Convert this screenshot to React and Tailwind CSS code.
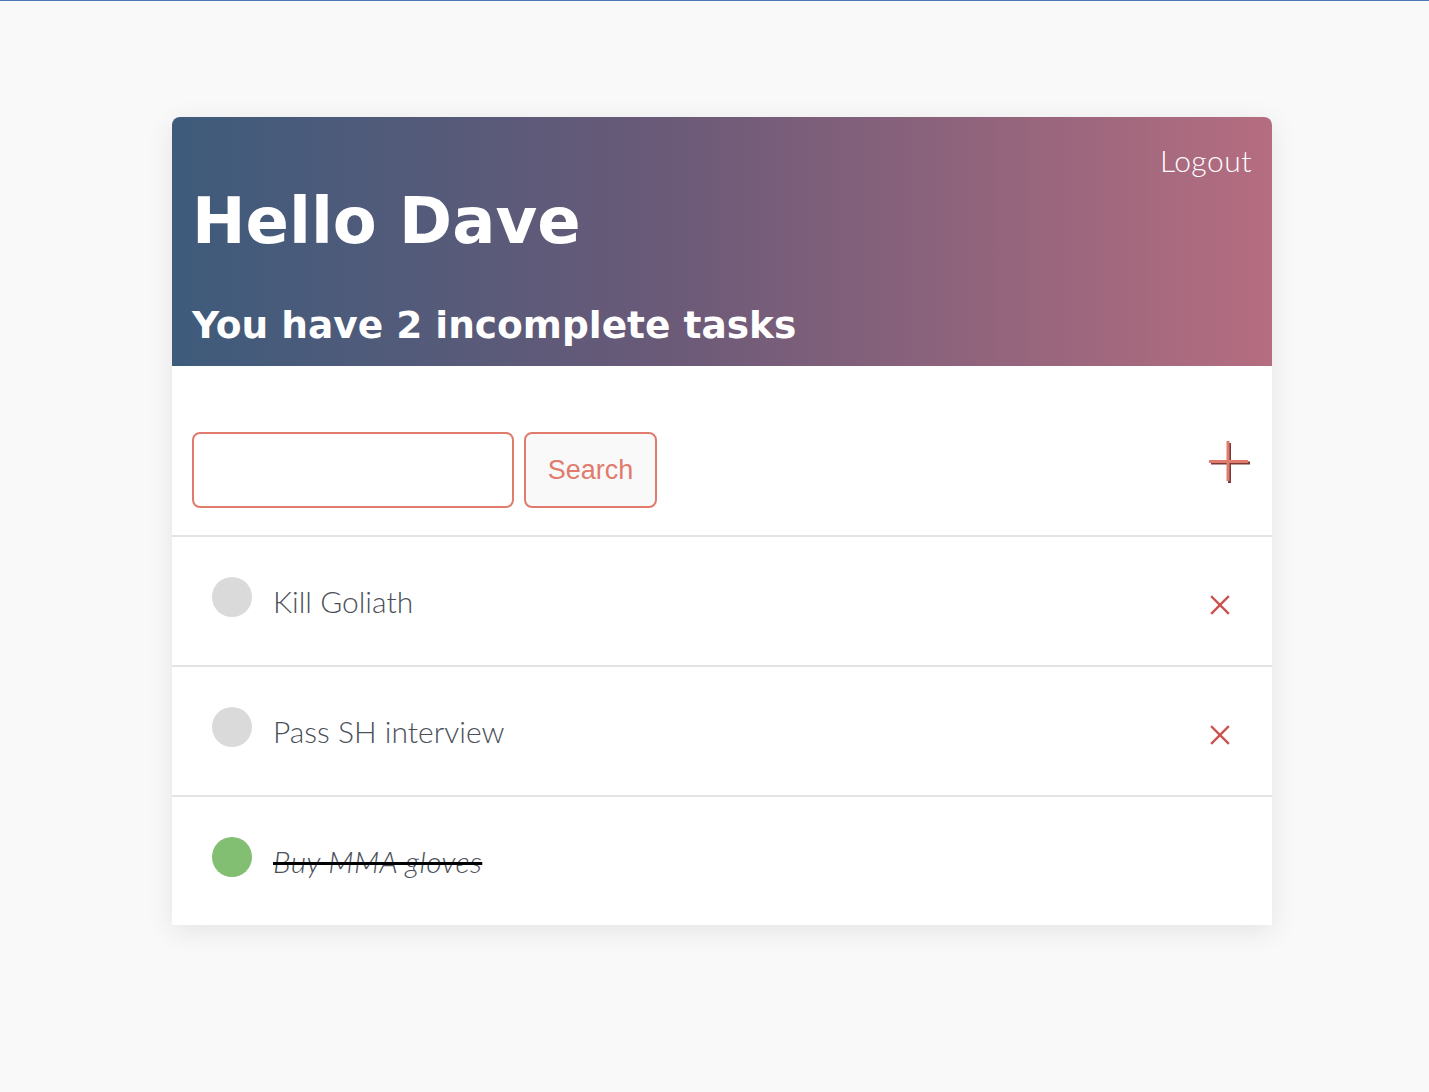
import React from "react";

function PlusIcon() {
  return (
    <svg width="44" height="44" viewBox="0 0 44 44" className="block">
      <g stroke="#7a3b37" strokeWidth="3">
        <line x1="20.5" y1="3" x2="20.5" y2="43" />
        <line x1="2" y1="23" x2="41" y2="23" />
      </g>
      <g stroke="#e07b6e" strokeWidth="3">
        <line x1="19" y1="1" x2="19" y2="41" />
        <line x1="0" y1="21.5" x2="39" y2="21.5" />
      </g>
    </svg>
  );
}

function XIcon() {
  return (
    <svg width="20" height="20" viewBox="0 0 20 20" className="block">
      <g stroke="#c9534f" strokeWidth="2.4" strokeLinecap="square">
        <line x1="2" y1="2" x2="18" y2="18" />
        <line x1="18" y1="2" x2="2" y2="18" />
      </g>
    </svg>
  );
}

function Row({ text, done }) {
  return (
    <div className="flex h-[130px] items-center border-t-2 border-[#e3e3e3] pl-10 pr-[42px]">
      <div
        className={
          done
            ? "h-10 w-10 shrink-0 rounded-full bg-[#82bf73] -mt-2"
            : "h-10 w-10 shrink-0 rounded-full bg-[#dadada] -mt-2"
        }
      />
      <div
        className={
          done
            ? "ml-[21px] text-[30px] font-light italic tracking-[0.4px] text-[#4b5058] line-through decoration-black decoration-[3px]"
            : "ml-[21px] text-[30px] font-light text-[#4b5058]"
        }
        style={{ fontFamily: "Lato, 'Open Sans', sans-serif" }}
      >
        {text}
      </div>
      <div className="flex-1" />
      {!done && (
        <div className="mt-2">
          <XIcon />
        </div>
      )}
    </div>
  );
}

export default function App() {
  return (
    <div className="min-h-[1092px] w-full border-t border-[#4a78b0] bg-[#f9f9f9] pt-[116px]">
      <div className="ml-[172px] w-[1100px] rounded-t-lg bg-white shadow-[0_6px_28px_rgba(0,0,0,0.09)]">
        <div className="h-[249px] rounded-t-lg bg-[linear-gradient(to_right,#3e5b7b,#6a5a78_45%,#b56d80)] px-5 text-white">
          <div className="flex justify-end pt-[23px]">
            <span
              className="text-[30px] font-light leading-[40px] tracking-[0.5px]"
              style={{ fontFamily: "Lato, 'Open Sans', sans-serif" }}
            >
              Logout
            </span>
          </div>
          <h1
            className="mt-[1px] text-[64px] font-bold leading-[80px]"
            style={{ fontFamily: "'DejaVu Sans', Verdana, sans-serif" }}
          >
            Hello Dave
          </h1>
          <h2
            className="mt-[41px] text-[37.5px] font-bold leading-[46px]"
            style={{ fontFamily: "'DejaVu Sans', Verdana, sans-serif" }}
          >
            You have 2 incomplete tasks
          </h2>
        </div>
        <div className="flex h-[169px] items-start pl-[20px] pr-[19px] pt-[66px]">
          <input
            className="h-[76px] w-[322px] rounded-lg border-2 border-[#e07b6e] bg-white outline-none"
            type="text"
          />
          <button
            className="ml-[10px] h-[76px] w-[133px] rounded-lg border-2 border-[#e07b6e] bg-[#f9f9f9] text-[27px] text-[#e07b6e]"
            style={{ fontFamily: "'Liberation Sans', Arial, sans-serif" }}
          >
            Search
          </button>
          <div className="flex-1" />
          <div className="mt-[8px]">
            <PlusIcon />
          </div>
        </div>
        <Row text="Kill Goliath" />
        <Row text="Pass SH interview" />
        <Row text="Buy MMA gloves" done />
      </div>
    </div>
  );
}
